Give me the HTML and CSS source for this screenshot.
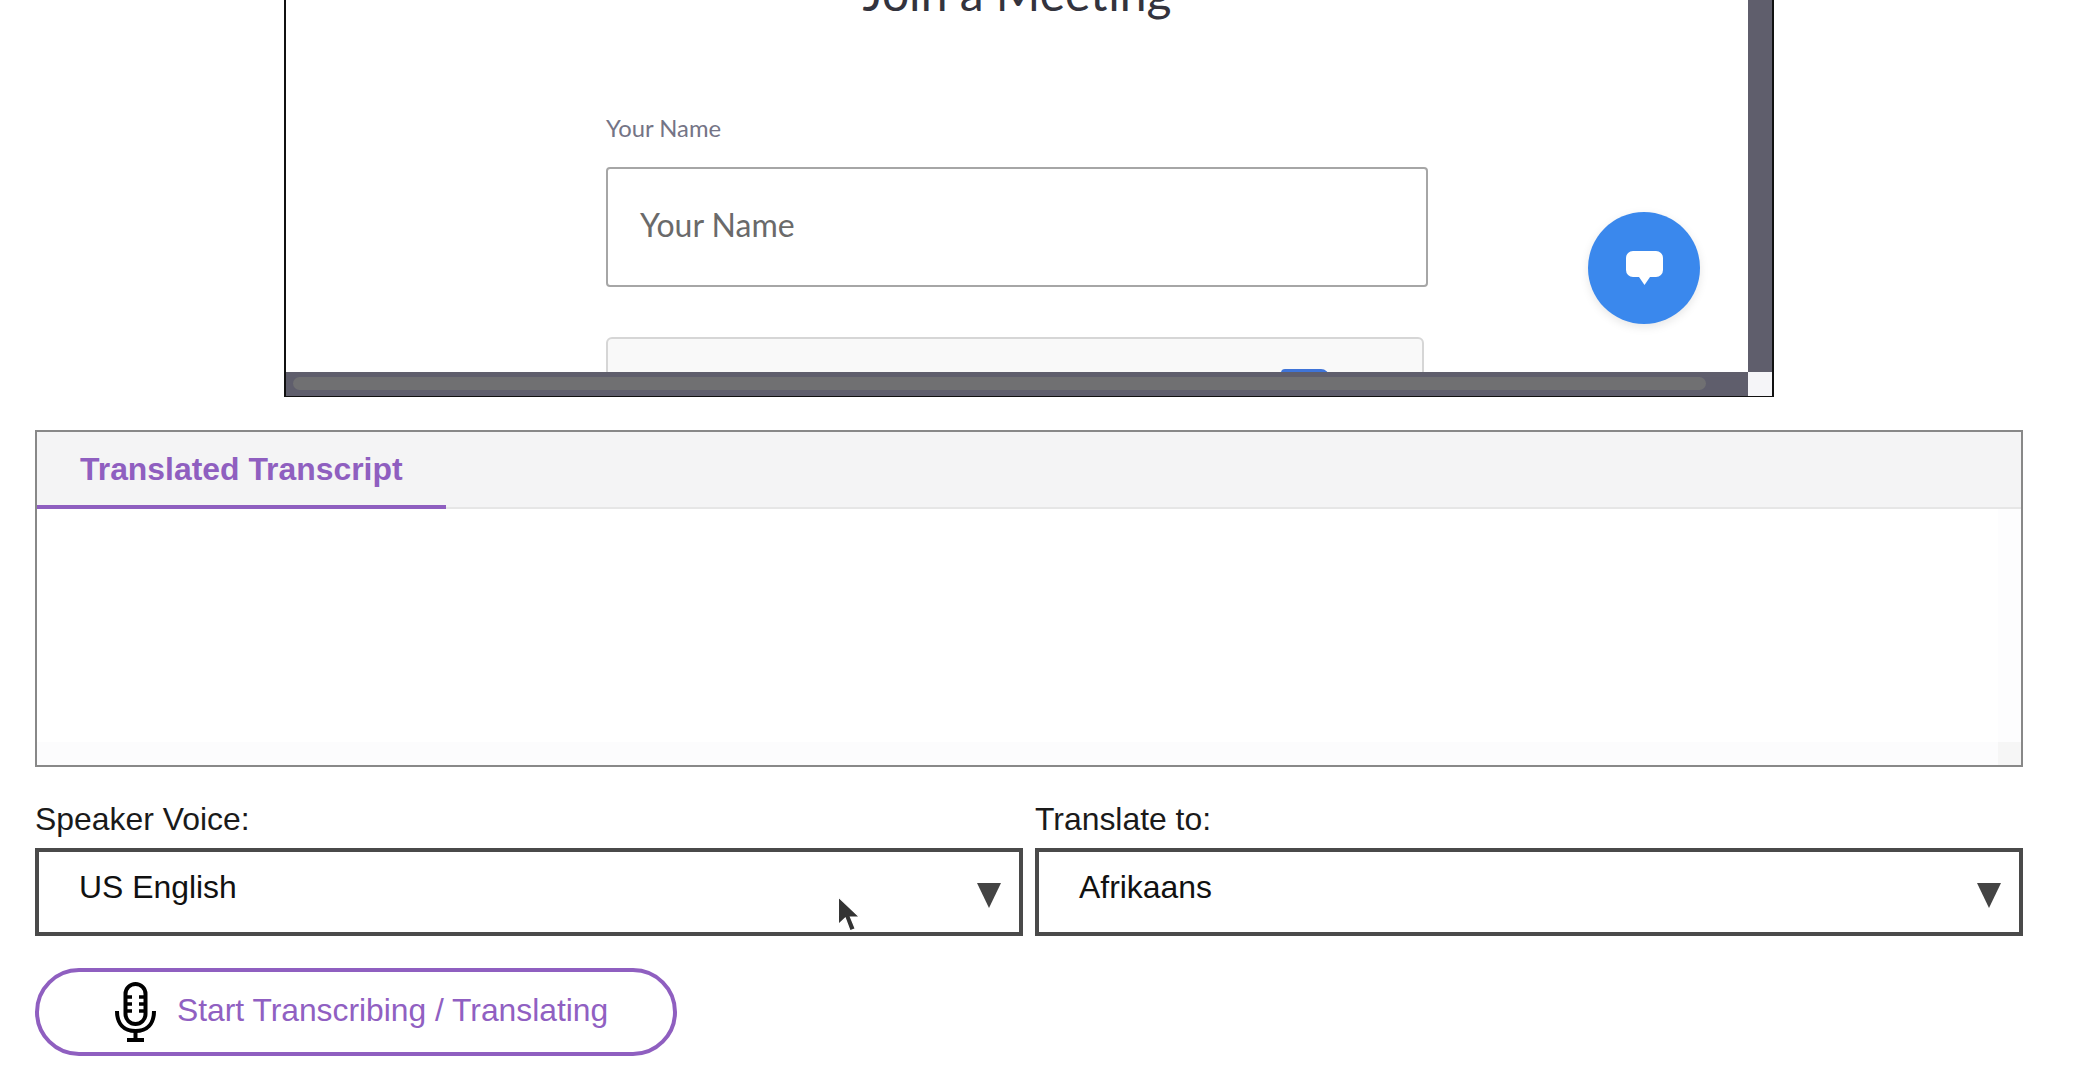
FILE: index.html
```html
<!DOCTYPE html>
<html lang="en">
<head>
<meta charset="utf-8">
<title>Translated Transcript</title>
<link rel="stylesheet" href="styles.css">
</head>
<body>
<div class="page">
  <section class="frame">
    <div class="viewport">
      <h1 class="join-title">Join a Meeting</h1>
      <div class="join-form">
        <label class="field-label">Your Name</label>
        <div class="name-input">Your Name</div>
        <div class="captcha"><span class="captcha-logo"></span></div>
      </div>
      <button class="chat-fab" type="button" aria-label="Chat">
        <svg width="37" height="34" viewBox="0 0 37 34"><path d="M7 0H30A7 7 0 0 1 37 7V19A7 7 0 0 1 30 26H24L18.5 34L13 26H7A7 7 0 0 1 0 19V7A7 7 0 0 1 7 0Z" fill="#fff"/></svg>
      </button>
    </div>
    <div class="vbar"></div>
    <div class="hbar"><div class="hthumb"></div></div>
    <div class="corner"></div>
  </section>

  <section class="transcript">
    <div class="tabs"><div class="tab">Translated Transcript</div></div>
    <div class="transcript-body">
      <div class="ghost-main"></div>
      <div class="ghost-v"></div>
      <div class="ghost-h"></div>
      <div class="ghost-c"></div>
    </div>
  </section>

  <div class="selects">
    <div class="select-group">
      <div class="select-label">Speaker Voice:</div>
      <div class="select-box"><span>US English</span><i class="arrow"></i></div>
    </div>
    <div class="select-group">
      <div class="select-label">Translate to:</div>
      <div class="select-box"><span>Afrikaans</span><i class="arrow"></i></div>
    </div>
  </div>

  <button class="start-btn" type="button">
    <svg class="mic" width="41" height="60" viewBox="0 0 41 60" fill="none" stroke="#000">
      <rect x="10.5" y="2" width="20" height="40" rx="10" stroke-width="4"/>
      <path d="M10 15H17M24 15H31M10 22H17M24 22H31M10 29H17M24 29H31" stroke-width="3.5"/>
      <path d="M2 29C2 42 9 49 20.5 49C32 49 39 42 39 29" stroke-width="4"/>
      <path d="M20.5 49V57" stroke-width="4"/>
      <path d="M12 58H29" stroke-width="4"/>
    </svg>
    <span>Start Transcribing / Translating</span>
  </button>
</div>
<svg class="cursor" width="26" height="38" viewBox="0 0 24 36">
  <path d="M1 1V27L7.5 21L12 33L17 31L12.5 20H21Z" fill="#333" stroke="#fff" stroke-width="1.2"/>
</svg>
</body>
</html>
```
FILE: styles.css
```css
* { box-sizing: border-box; }
html, body { margin: 0; height: 100%; background: #fff; overflow: hidden; }
body { font-family: "Liberation Sans", Arial, sans-serif; color: #1a1a1a; position: relative; }
.page { padding: 0 67px 0 35px; }

.frame {
  display: grid;
  grid-template-columns: 1fr 24px;
  grid-template-rows: 372px 24px;
  width: 1490px;
  height: 397px;
  margin-left: 249px;
  border: solid #111;
  border-width: 0 2px 1px 2px;
}
.viewport { position: relative; overflow: hidden; background: #fff; padding-left: 320px; }
.join-title {
  width: 822px;
  margin: -32px 0 0;
  height: 50px;
  text-align: center;
  font: 400 48px/50px Lato, sans-serif;
  color: #33333d;
}
.join-form { width: 822px; }
.field-label { display: block; margin-top: 97px; font: 400 23.8px/26px Lato, sans-serif; color: #747486; }
.name-input {
  height: 120px;
  margin-top: 26px;
  padding: 0 32px 4px;
  display: flex;
  align-items: center;
  border: 2px solid #a6a6a6;
  border-radius: 4px;
  font: 400 32px/1 Lato, sans-serif;
  color: #6a6a6a;
}
.captcha {
  position: relative;
  width: 818px;
  height: 60px;
  margin-top: 50px;
  background: #f9f9f9;
  border: 2px solid #d6d6d6;
  border-radius: 6px;
}
.captcha-logo {
  position: absolute;
  left: 673px;
  top: 30px;
  width: 48px;
  height: 30px;
  background: #3f74d8;
  border-radius: 4px 8px 0 0;
}
.chat-fab {
  position: absolute;
  left: 1302px;
  top: 212px;
  width: 112px;
  height: 112px;
  border: 0;
  padding: 0;
  border-radius: 50%;
  background: #3a88ed;
  box-shadow: 0 3px 10px rgba(0, 0, 0, .1);
  display: flex;
  align-items: center;
  justify-content: center;
}
.vbar { background: #5f5e6c; }
.hbar { background: #5f5e6c; padding: 5px 42px 6px 7px; }
.hthumb { height: 13px; background: #707072; border-radius: 7px; }
.corner { background: #f5f5f8; }

.transcript {
  height: 337px;
  margin-top: 33px;
  border: 2px solid #888;
  display: flex;
  flex-direction: column;
}
.tabs { height: 77px; background: #f4f4f5; border-bottom: 2px solid #e6e6e6; flex: none; }
.tab {
  width: 409px;
  height: 77px;
  padding: 2px 0 0 43px;
  display: flex;
  align-items: center;
  border-bottom: 4px solid #8f5fc0;
  font-weight: 700;
  font-size: 31.9px;
  color: #8f5fc0;
}
.transcript-body { flex: 1; display: grid; grid-template-columns: 1fr 23px; grid-template-rows: 1fr 23px; }
.ghost-v { background: #fdfdfe; }
.ghost-h { background: #fcfcfd; }
.ghost-c { background: #f6f6f6; }

.selects { display: grid; grid-template-columns: 988px 988px; column-gap: 12px; margin-top: 34px; }
.select-label { font-size: 31.9px; line-height: 37px; color: #1a1a1a; height: 47px; }
.select-box {
  height: 88px;
  padding: 0 18px 0 40px;
  display: flex;
  align-items: center;
  justify-content: space-between;
  border: 4px solid #4a4a4a;
  font-size: 31.9px;
  color: #111;
}
.select-box span { padding-bottom: 10px; }
.arrow {
  width: 0;
  height: 0;
  margin-top: 6px;
  border-left: 12px solid transparent;
  border-right: 12px solid transparent;
  border-top: 25px solid #444;
}

.start-btn {
  display: flex;
  align-items: center;
  gap: 21px;
  width: 642px;
  height: 88px;
  margin-top: 32px;
  padding: 0 0 0 76px;
  background: #fff;
  border: 4px solid #8f5fc0;
  border-radius: 44px;
  font: 400 31.8px "Liberation Sans", Arial, sans-serif;
  color: #9060c2;
}
.start-btn span { padding-bottom: 3px; }
.cursor { position: absolute; left: 837px; top: 896px; }
```
